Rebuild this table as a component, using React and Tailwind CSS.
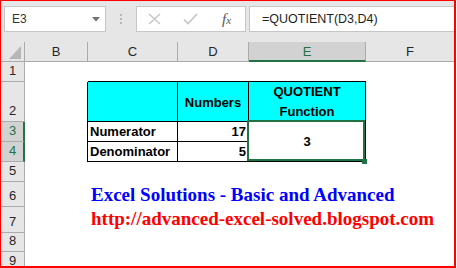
import React from "react";

const GREEN = "#217346";

function ColHead({ children, selected, last }) {
  if (selected) {
    return (
      <div className="bg-[#d2d2d2] border-r border-r-[#ababab] border-b-2 border-b-[#217346] flex items-center justify-center text-[13px] text-[#217346] pt-[1px]">
        {children}
      </div>
    );
  }
  return (
    <div
      className={
        "bg-[#e6e6e6] border-b border-b-[#ababab] flex items-center justify-center text-[13px] text-[#262626] pt-[1px] " +
        (last ? "" : "border-r border-r-[#ababab]")
      }
    >
      {children}
    </div>
  );
}

function RowHead({ n, selected }) {
  if (selected) {
    return (
      <div className="bg-[#d2d2d2] border-r-2 border-r-[#217346] border-b border-b-[#ababab] flex items-end justify-center text-[13px] leading-none text-[#217346] pb-[4px] pl-[1px]">
        {n}
      </div>
    );
  }
  return (
    <div className="bg-[#e6e6e6] border-r border-r-[#ababab] border-b border-b-[#ababab] flex items-end justify-center text-[13px] leading-none text-[#262626] pb-[4px]">
      {n}
    </div>
  );
}

export default function App() {
  return (
    <div className="w-[457px] h-[268px] bg-white font-['Liberation_Sans',Arial,sans-serif]">
      <div className="w-[456px] h-[268px] border-t border-l border-r-2 border-b-2 border-[#ff0000] flex flex-col overflow-hidden">
        {/* Formula bar */}
        <div className="h-[41px] shrink-0 bg-[#e6e6e6] flex items-start pt-[5px] pl-[3px]">
          <div className="w-[102px] h-[26px] bg-white border border-[#c6c6c6] flex items-center justify-between pl-[7px] pr-[5px]">
            <span className="text-[12px] text-[#333]">E3</span>
            <svg width="8" height="5" viewBox="0 0 8 5">
              <polygon points="0,0 8,0 4,4.5" fill="#707070" />
            </svg>
          </div>
          <div className="w-[30px] h-[26px] flex flex-col items-center justify-center gap-[2px]">
            <span className="w-[2px] h-[2px] bg-[#b8b8b8]" />
            <span className="w-[2px] h-[2px] bg-[#b8b8b8]" />
            <span className="w-[2px] h-[2px] bg-[#b8b8b8]" />
          </div>
          <div className="w-[110px] h-[26px] bg-white border border-[#c6c6c6] flex items-center pl-[11px]">
            <svg width="13" height="12" viewBox="0 0 13 12">
              <path d="M1 1 L12 11 M12 1 L1 11" stroke="#c4c4c4" strokeWidth="1.4" fill="none" />
            </svg>
            <svg width="15" height="12" viewBox="0 0 15 12" className="ml-[22px]">
              <path d="M1 6.5 L5 10.5 L14 1" stroke="#c4c4c4" strokeWidth="1.6" fill="none" />
            </svg>
            <span className="ml-[24px] font-['Liberation_Serif',serif] italic text-[15px] text-[#555] leading-none">
              f<span className="text-[11px]">x</span>
            </span>
          </div>
          <div className="ml-[3px] flex-1 h-[26px] bg-white border border-r-0 border-[#c6c6c6] flex items-center pl-[12px]">
            <span className="text-[12.5px] text-[#1f1f1f]">=QUOTIENT(D3,D4)</span>
          </div>
        </div>

        {/* Sheet grid */}
        <div className="grid grid-cols-[24px_63px_90px_71px_117px_88px] grid-rows-[20px_20px_40px_20px_20px_20px_25px_26px_19px_20px] shrink-0">
          {/* header row */}
          <div className="bg-[#e6e6e6] border-r border-b border-[#ababab] flex items-end justify-end pr-[3px] pb-[2px]">
            <svg width="12" height="13" viewBox="0 0 12 13">
              <polygon points="12,0 12,13 0,13" fill="#b6b6b6" />
            </svg>
          </div>
          <ColHead>B</ColHead>
          <ColHead>C</ColHead>
          <ColHead>D</ColHead>
          <ColHead selected>E</ColHead>
          <ColHead last>F</ColHead>

          {/* row 1 */}
          <RowHead n="1" />
          <div />
          <div className="border-b border-black" />
          <div className="border-b border-black" />
          <div className="border-b border-black" />
          <div />

          {/* row 2 */}
          <RowHead n="2" />
          <div className="border-r border-black" />
          <div className="bg-[#00ffff] border-r border-b border-black" />
          <div className="bg-[#00ffff] border-r border-b border-black flex items-center justify-center font-bold text-[13px] text-black pt-[2px]">
            Numbers
          </div>
          <div className="bg-[#00ffff] border-r border-b border-black flex flex-col items-center justify-center font-bold text-[13px] leading-[20px] text-black">
            <span>QUOTIENT</span>
            <span>Function</span>
          </div>
          <div />

          {/* row 3 */}
          <RowHead n="3" selected />
          <div className="border-r border-black" />
          <div className="border-r border-b border-black flex items-center pl-[2px] font-bold text-[13px] text-black pt-[1px]">
            Numerator
          </div>
          <div className="border-r border-b border-black flex items-center justify-end pr-[2px] font-bold text-[13px] text-black pt-[1px]">
            17
          </div>
          <div className="row-span-2 relative border-r border-b border-black flex items-center justify-center font-bold text-[13px] text-black">
            3
            <div className="absolute left-[-2px] top-[-2px] right-0 bottom-0 border-2 border-[#217346]" />
            <div className="absolute right-[-2px] bottom-[-3px] w-[5px] h-[5px] bg-[#217346] z-10" />
          </div>
          <div />

          {/* row 4 */}
          <RowHead n="4" selected />
          <div className="border-r border-black" />
          <div className="border-r border-b border-black flex items-center pl-[2px] font-bold text-[13px] text-black pt-[1px]">
            Denominator
          </div>
          <div className="border-r border-b border-black flex items-center justify-end pr-[2px] font-bold text-[13px] text-black pt-[1px]">
            5
          </div>
          <div />

          {/* row 5 */}
          <RowHead n="5" />
          <div />
          <div />
          <div />
          <div />
          <div />

          {/* row 6 */}
          <RowHead n="6" />
          <div />
          <div className="relative z-10 flex items-end pl-[3px] pb-[2px] whitespace-nowrap">
            <span className="font-['Liberation_Serif',serif] font-bold text-[19px] leading-[20px] text-[#0000ff]">
              Excel Solutions - Basic and Advanced
            </span>
          </div>
          <div />
          <div />
          <div />

          {/* row 7 */}
          <RowHead n="7" />
          <div />
          <div className="relative z-10 flex items-end pl-[3px] pb-[4px] whitespace-nowrap">
            <span className="font-['Liberation_Serif',serif] font-bold text-[19px] leading-[20px] text-[#ff0000]">
              http://advanced-excel-solved.blogspot.com
            </span>
          </div>
          <div />
          <div />
          <div />

          {/* row 8 */}
          <RowHead n="8" />
          <div />
          <div />
          <div />
          <div />
          <div />

          {/* row 9 */}
          <RowHead n="9" />
          <div />
          <div />
          <div />
          <div />
          <div />
        </div>
      </div>
    </div>
  );
}
